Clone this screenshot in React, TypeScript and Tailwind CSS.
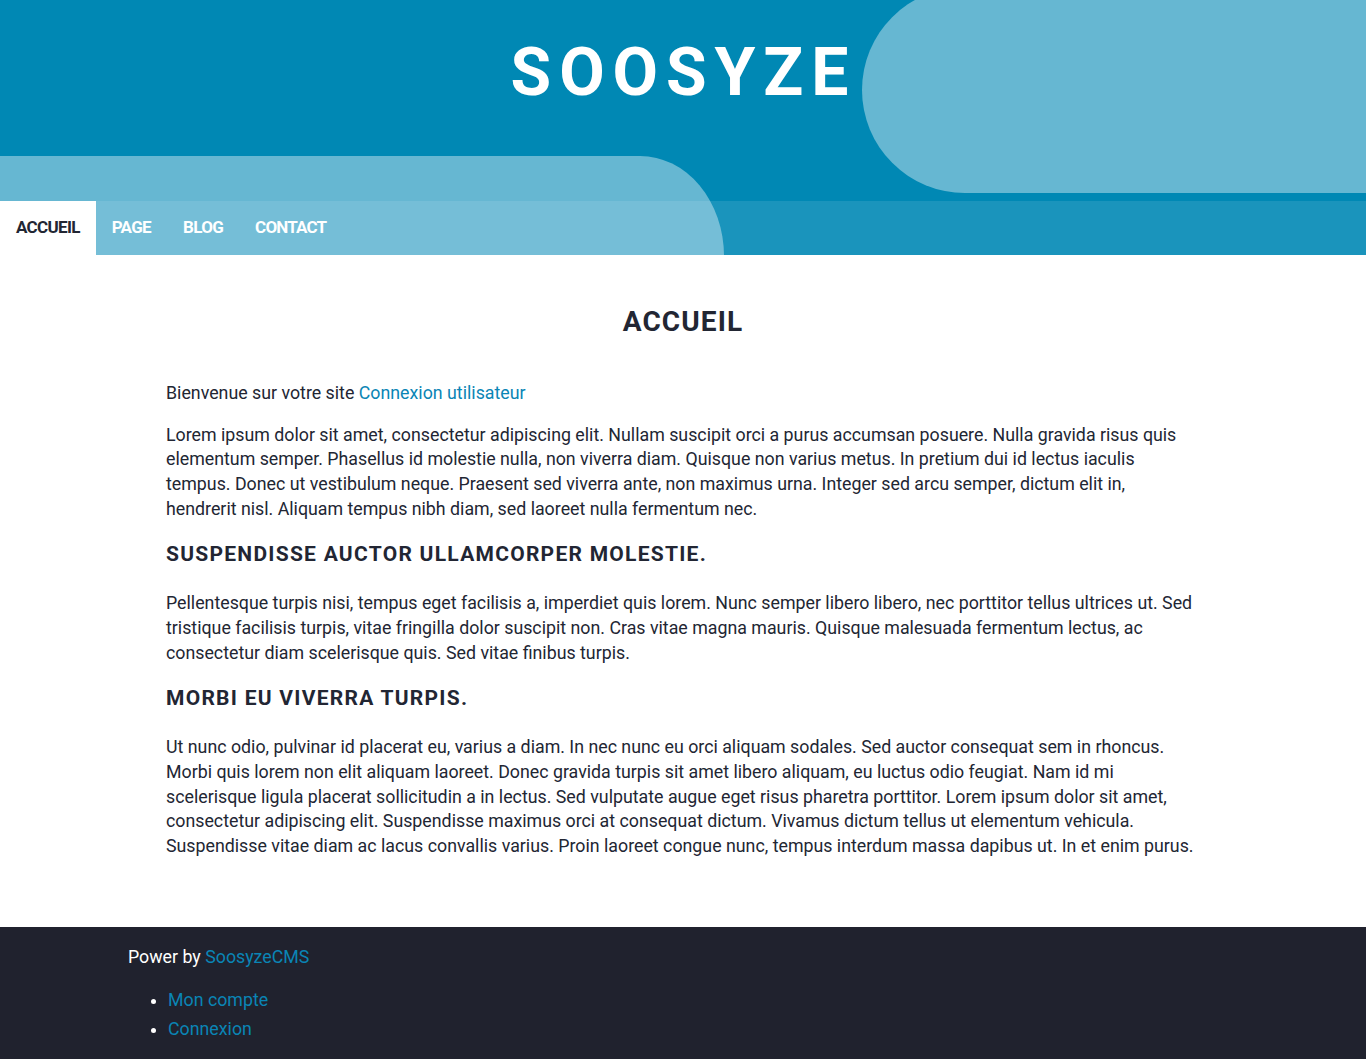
import React from "react";

const font = { fontFamily: "Roboto, 'Noto Sans', sans-serif" };

export default function App() {
  return (
    <div style={font} className="min-h-[1059px] bg-white text-[#222633]">
      <header className="relative overflow-hidden bg-[#0088b4]">
        <div className="absolute left-[862px] top-[-13px] h-[206px] w-[700px] rounded-full bg-white/40" />
        <div className="absolute left-[-100px] top-[156px] h-[200px] w-[824px] rounded-tr-[84px_100px] bg-white/40" />
        <div className="relative flex h-[201px] items-start justify-center pl-[1px] pt-[40px]">
          <h1 className="text-[66px] font-bold leading-none tracking-[0.12em] text-white">SOOSYZE</h1>
        </div>
        <nav className="relative flex h-[54px] bg-white/10">
          <a className="flex items-center bg-white px-[16px] text-[17px] font-bold tracking-[-0.04em] text-[#222633]">ACCUEIL</a>
          <a className="flex items-center px-[16px] text-[17px] font-bold tracking-[-0.04em] text-white">PAGE</a>
          <a className="flex items-center px-[16px] text-[17px] font-bold tracking-[-0.04em] text-white">BLOG</a>
          <a className="flex items-center px-[16px] text-[17px] font-bold tracking-[-0.05em] text-white">CONTACT</a>
        </nav>
      </header>

      <main className="mx-auto w-[1034px] pb-[51px] pt-[50px] text-[17.8px] leading-[24.6px]">
        <h1 className="mb-[42px] text-center text-[28px] font-bold leading-[1.2] tracking-[0.04em]">ACCUEIL</h1>
        <p className="mb-[17.6px]">
          Bienvenue sur votre site <a className="text-[#0a85b5]">Connexion utilisateur</a>
        </p>
        <p className="mb-[17.6px]">
          Lorem ipsum dolor sit amet, consectetur adipiscing elit. Nullam suscipit orci a purus accumsan posuere. Nulla gravida risus quis elementum semper. Phasellus id molestie nulla, non viverra diam. Quisque non varius metus. In pretium dui id lectus iaculis tempus. Donec ut vestibulum neque. Praesent sed viverra ante, non maximus urna. Integer sed arcu semper, dictum elit in, hendrerit nisl. Aliquam tempus nibh diam, sed laoreet nulla fermentum nec.
        </p>
        <h2 className="mb-[24px] mt-[21px] text-[21px] font-bold leading-[1.2] tracking-[0.06em]">SUSPENDISSE AUCTOR ULLAMCORPER MOLESTIE.</h2>
        <p className="mb-[17.6px]">
          Pellentesque turpis nisi, tempus eget facilisis a, imperdiet quis lorem. Nunc semper libero libero, nec porttitor tellus ultrices ut. Sed tristique facilisis turpis, vitae fringilla dolor suscipit non. Cras vitae magna mauris. Quisque malesuada fermentum lectus, ac consectetur diam scelerisque quis. Sed vitae finibus turpis.
        </p>
        <h2 className="mb-[24px] mt-[21px] text-[21px] font-bold leading-[1.2] tracking-[0.06em]">MORBI EU VIVERRA TURPIS.</h2>
        <p className="mb-[17.6px]">
          Ut nunc odio, pulvinar id placerat eu, varius a diam. In nec nunc eu orci aliquam sodales. Sed auctor consequat sem in rhoncus. Morbi quis lorem non elit aliquam laoreet. Donec gravida turpis sit amet libero aliquam, eu luctus odio feugiat. Nam id mi scelerisque ligula placerat sollicitudin a in lectus. Sed vulputate augue eget risus pharetra porttitor. Lorem ipsum dolor sit amet, consectetur adipiscing elit. Suspendisse maximus orci at consequat dictum. Vivamus dictum tellus ut elementum vehicula. Suspendisse vitae diam ac lacus convallis varius. Proin laoreet congue nunc, tempus interdum massa dapibus ut. In et enim purus.
        </p>
      </main>

      <footer className="bg-[#20222e] pb-[20px] pt-[18px] text-[17.8px] leading-[1.4] text-white">
        <div className="mx-auto w-[1110px]">
          <p className="mb-[15px]">
            Power by <a className="text-[#0a85b5]">SoosyzeCMS</a>
          </p>
          <ul className="list-disc pl-[40px] leading-[29px] marker:text-[17px] marker:text-white">
            <li><a className="text-[#0a85b5]">Mon compte</a></li>
            <li><a className="text-[#0a85b5]">Connexion</a></li>
          </ul>
        </div>
      </footer>
    </div>
  );
}
